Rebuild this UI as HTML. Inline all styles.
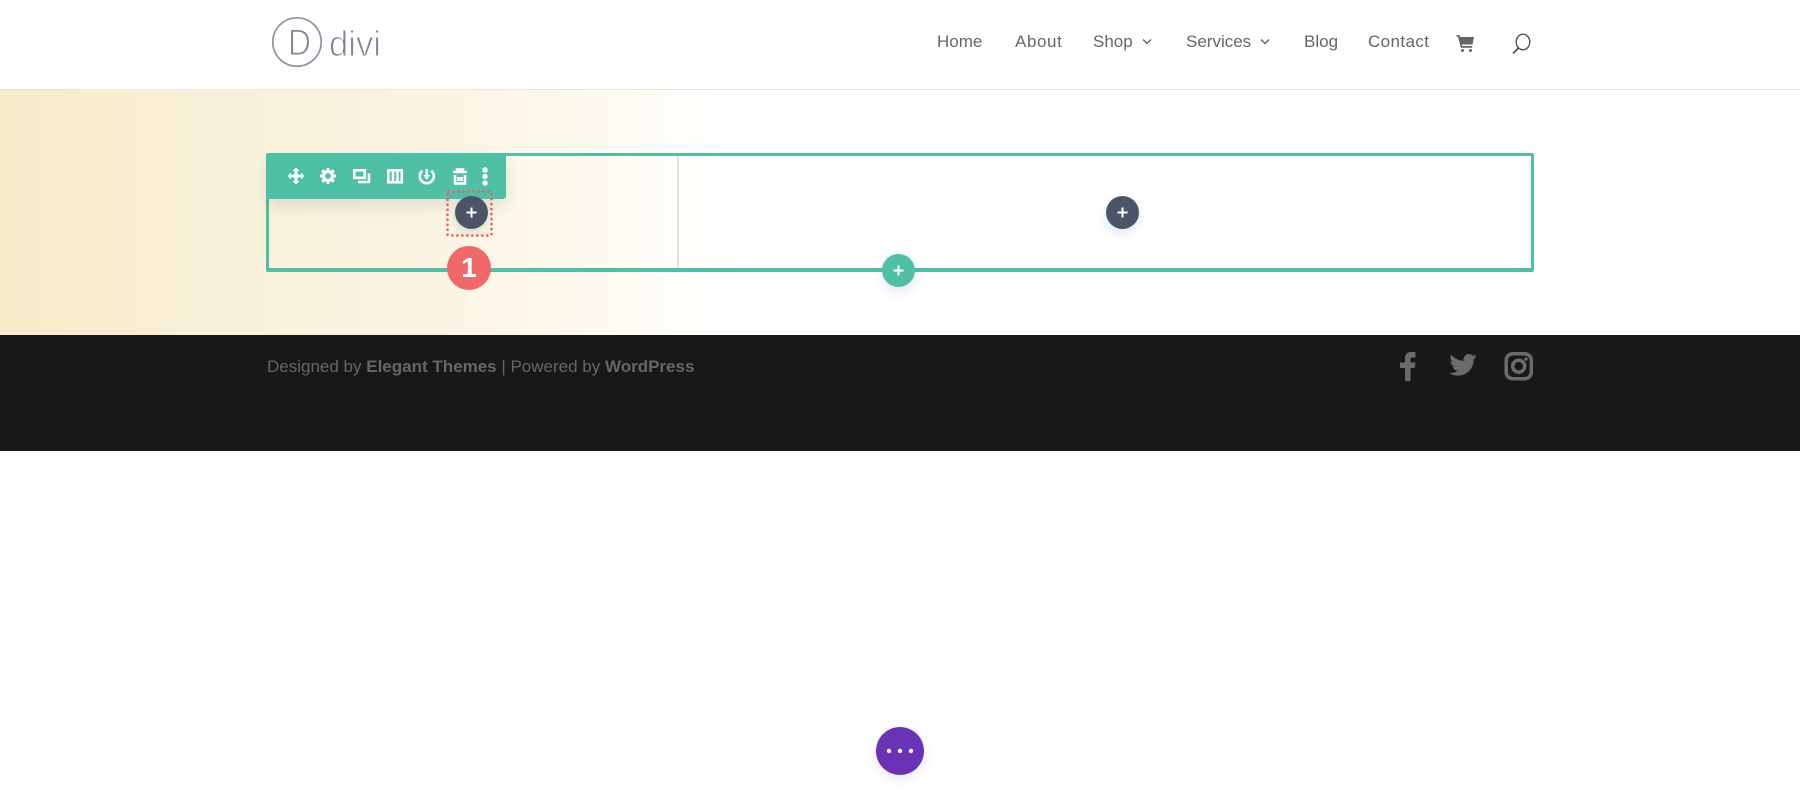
<!DOCTYPE html>
<html><head><meta charset="utf-8"><style>
html,body{margin:0;padding:0;width:1800px;height:796px;background:#fff;overflow:hidden}
body{position:relative;font-family:"Liberation Sans",sans-serif}
.a{position:absolute}
.n{position:absolute;top:32px;font-size:17px;line-height:20px;color:#666;white-space:nowrap}
.c{position:absolute;border-radius:50%;width:33px;height:33px}
.c svg{position:absolute;left:0;top:0}
</style></head><body>
<div class="a" style="left:0;top:0;width:1800px;height:89px;background:#fff"></div>
<div class="a" style="left:0;top:89px;width:1800px;height:1px;background:#e8e5da"></div>
<svg class="a" style="left:270px;top:14px" width="120" height="58" viewBox="0 0 120 58">
<circle cx="27" cy="28" r="24.200" fill="none" stroke="#8c92a0" stroke-width="1.700"/>
<text x="18" y="41" font-family="Liberation Sans" font-size="37" fill="#7f8594" stroke="#fff" stroke-width="1.100" textLength="23" lengthAdjust="spacingAndGlyphs">D</text>
<text x="59" y="42" font-family="Liberation Sans" font-size="36" fill="#7f8594" stroke="#fff" stroke-width="1" textLength="52" lengthAdjust="spacingAndGlyphs">divi</text>
</svg>
<span class="n" style="left:937px">Home</span>
<span class="n" style="left:1015px;letter-spacing:.6px">About</span>
<span class="n" style="left:1093px">Shop</span>
<svg class="a" style="left:1141px;top:37px" width="12" height="10"><path d="M2 2.500l4 4 4-4" fill="none" stroke="#666" stroke-width="1.500"/></svg>
<span class="n" style="left:1186px">Services</span>
<svg class="a" style="left:1259px;top:37px" width="12" height="10"><path d="M2 2.500l4 4 4-4" fill="none" stroke="#666" stroke-width="1.500"/></svg>
<span class="n" style="left:1304px">Blog</span>
<span class="n" style="left:1368px;letter-spacing:.4px">Contact</span>
<svg class="a" style="left:1455px;top:34px" width="20" height="19" viewBox="0 0 20 19"><path d="M1.500 1h3l.5 2H19l-1.500 7.500H6.800l.4 1.500h10v1.700H5.800L3 2.700H1.500z" fill="#666"/><circle cx="7.500" cy="16.500" r="1.500" fill="#666"/><circle cx="15.500" cy="16.500" r="1.500" fill="#666"/></svg>
<svg class="a" style="left:1510px;top:33px" width="22" height="22" viewBox="0 0 22 22"><ellipse cx="13" cy="9" rx="6.800" ry="7.800" fill="none" stroke="#555" stroke-width="1.400"/><path d="M8.500 15L3 20.500" stroke="#555" stroke-width="1.800" fill="none"/></svg>

<div class="a" style="left:0;top:90px;width:1800px;height:245px;background:linear-gradient(90deg,#f6ecc9 0,#f8f0d8 200px,#faf4e2 430px,#fdfaf0 600px,#fff 730px)"></div>

<div class="a" style="left:266px;top:153px;width:1268px;height:119px;box-sizing:border-box;border:solid #4fc0a5;border-width:3px 3.500px 4px 3.500px;border-radius:2px"></div>
<div class="a" style="left:677px;top:156px;width:2px;height:112px;background:#e2e0da"></div>

<div class="a" style="left:267px;top:153px;width:239px;height:46px;background:#4fc0a5;border-radius:3px;box-shadow:0 8px 14px rgba(43,87,101,.12)"></div>
<svg class="a" style="left:267px;top:153px" width="239" height="46" viewBox="267 153 239 46" fill="none" stroke="#fff" stroke-width="2.600">
<path d="M296 169v14M289 176h14" stroke-width="2.800"/><path d="M292.500 171l3.500-3.500 3.500 3.500zM292.500 181l3.500 3.500 3.500-3.500zM291 172.500l-3.500 3.500 3.500 3.500zM301 172.500l3.500 3.500-3.500 3.500z" fill="#fff" stroke="none"/>
<circle cx="328" cy="176" r="4.500" stroke-width="3.200"/><path d="M328 168v3M328 181v3M320 176h3M333 176h3M322.300 170.300l2 2M331.700 179.700l2 2M333.700 170.300l-2 2M324.300 179.700l-2 2" stroke-width="3"/>
<rect x="354.300" y="170.300" width="10.500" height="7.500"/><path d="M358 182h11v-8.500"/>
<rect x="388.300" y="170.300" width="13.500" height="12"/><path d="M393 170v12M397.500 170v12"/>
<path d="M422.300 170.800a7 7 0 1 0 9 0"/><path d="M426.800 169v10"/><path d="M423.300 175l3.500 4.500 3.500-4.500z" fill="#fff" stroke="none"/>
<path d="M453 172h14M457 172v-2.500h6v2.500M455 175v8.500h10V175M458.500 177v4M461.500 177v4"/>
<circle cx="485" cy="170" r="2.700" fill="#fff" stroke="none"/><circle cx="485" cy="176.500" r="2.700" fill="#fff" stroke="none"/><circle cx="485" cy="183" r="2.700" fill="#fff" stroke="none"/>
</svg>

<div class="c" style="left:454.500px;top:195.500px;background:#4a5568;box-shadow:0 4px 10px rgba(43,87,101,.15)"><svg width="33" height="33"><path d="M16.500 11.500v10M11.500 16.500h10" stroke="#fff" stroke-width="2"/></svg></div>
<svg class="a" style="left:445px;top:189px" width="50" height="50"><rect x="2.500" y="2.500" width="44" height="44" rx="1" fill="none" stroke="#e8636a" stroke-width="2.700" stroke-linecap="round" stroke-dasharray="0 5"/></svg>
<div class="c" style="left:447px;top:246px;width:44px;height:44px;background:#f0696a;color:#fff;font:bold 28px/44px 'Liberation Sans',sans-serif;text-align:center">1</div>
<div class="c" style="left:1106px;top:195.500px;background:#4a5568;box-shadow:0 4px 10px rgba(43,87,101,.15)"><svg width="33" height="33"><path d="M16.500 11.500v10M11.500 16.500h10" stroke="#fff" stroke-width="2"/></svg></div>
<div class="c" style="left:881.500px;top:253.500px;background:#4fc0a5;box-shadow:0 5px 12px rgba(60,110,180,.15)"><svg width="33" height="33"><path d="M16.500 11.500v10M11.500 16.500h10" stroke="#fff" stroke-width="2"/></svg></div>

<div class="a" style="left:0;top:335px;width:1800px;height:116px;background:#181818"></div>
<div class="a" style="left:267px;top:357px;font-size:17px;line-height:20px;color:#666;white-space:nowrap">Designed by <b>Elegant Themes</b> | Powered by <b>WordPress</b></div>
<svg class="a" style="left:1395px;top:348px" width="145" height="38" viewBox="1395 348 145 38" fill="#6b6b6b">
<path d="M1405 381v-13h-5v-5.500h5v-4.500c0-4 2.500-6 6-6h4.500v5.500h-3c-1.500 0-2 .7-2 2v3h5l-.8 5.500h-4.200v13z"/>
<path d="M1477 356.500c-1 .5-2 .8-3 .9 1.100-.7 1.900-1.700 2.300-2.900-1 .6-2.100 1-3.300 1.300a5.500 5.500 0 0 0-9.400 5c-5-.2-9.300-2.600-12.300-6.100-1.500 2.500-.8 5.700 1.700 7.300-.9 0-1.700-.3-2.500-.7 0 2.700 1.900 4.900 4.500 5.500-.8.200-1.600.2-2.500.1.700 2.200 2.800 3.800 5.200 3.800-2.400 1.800-5.300 2.700-8.300 2.400 2.500 1.600 5.400 2.500 8.500 2.500 10.300 0 16-8.500 15.700-16.200 1.100-.7 2-1.700 2.900-2.900z"/>
<rect x="1506.200" y="353.700" width="25.100" height="25.100" rx="6.500" fill="none" stroke="#6b6b6b" stroke-width="3.500"/>
<circle cx="1518.700" cy="366.200" r="6" fill="none" stroke="#6b6b6b" stroke-width="3.500"/>
<circle cx="1526" cy="359" r="1.800"/>
</svg>

<div class="c" style="left:876px;top:727px;width:48px;height:48px;background:#6a33b5;box-shadow:0 4px 12px rgba(107,51,184,.12)"><svg width="48" height="48"><circle cx="13" cy="24" r="2.200" fill="#fff"/><circle cx="24" cy="24" r="2.200" fill="#fff"/><circle cx="35" cy="24" r="2.200" fill="#fff"/></svg></div>
</body></html>
